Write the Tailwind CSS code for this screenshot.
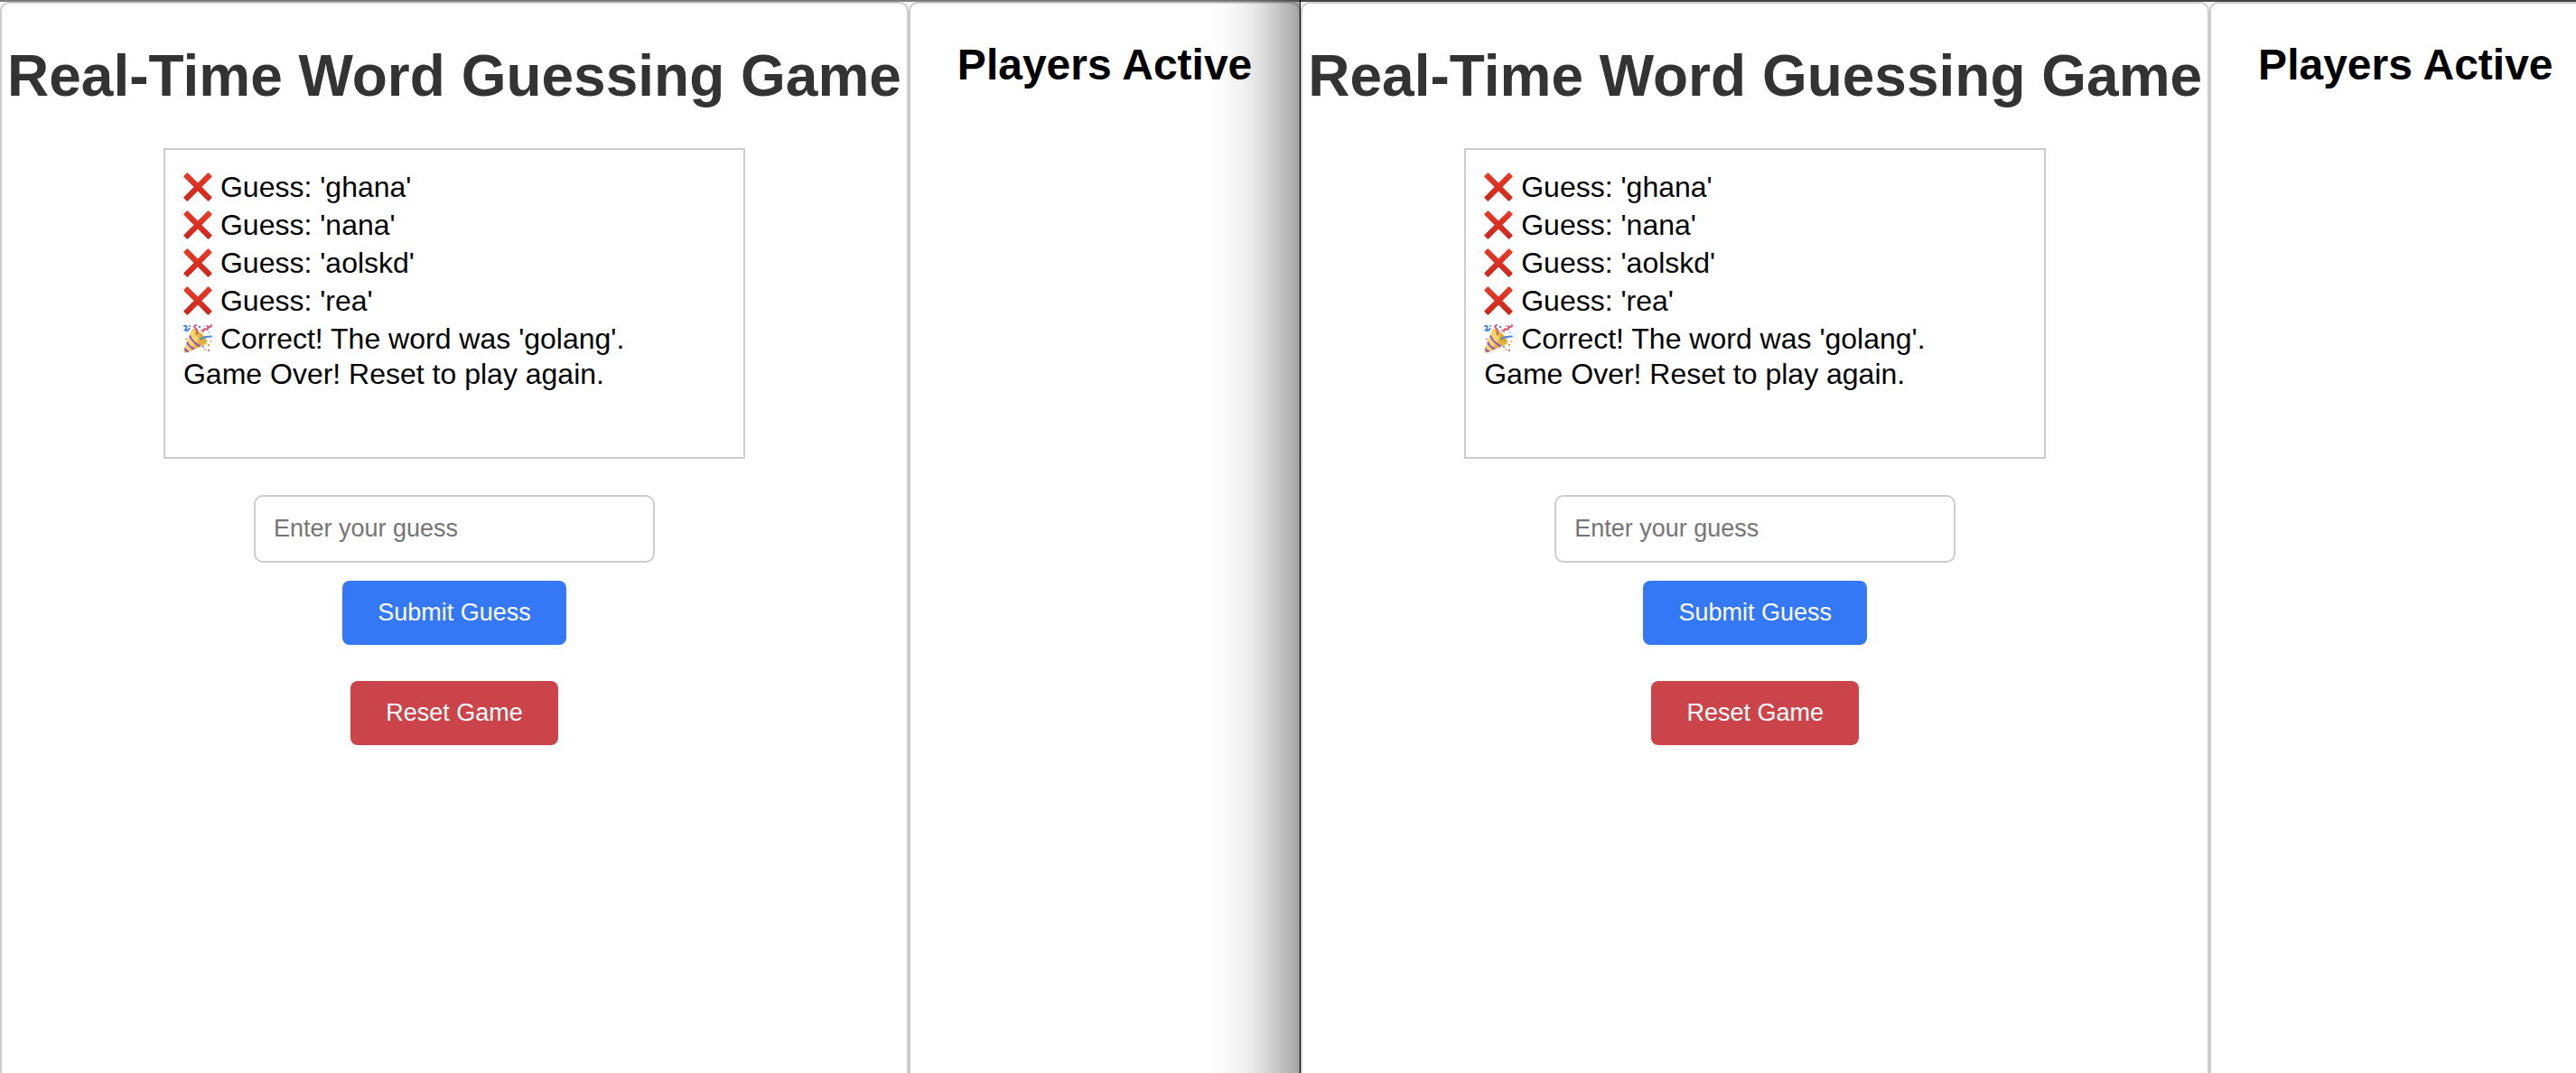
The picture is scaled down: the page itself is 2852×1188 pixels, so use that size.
<!DOCTYPE html>
<html lang="en">
<head>
<meta charset="utf-8">
<title>Real-Time Word Guessing Game</title>
<script src="https://cdn.jsdelivr.net/npm/@tailwindcss/browser@4"></script>
</head>
<body class="min-h-screen overflow-hidden bg-[#f4f4f4] font-['Liberation_Sans',Arial,sans-serif] text-[32px] leading-[42px] text-black">

<!-- Shared icons -->
<svg class="absolute size-0" aria-hidden="true">
  <defs>
    <linearGradient id="red" x1="0" y1="0" x2="0" y2="1"><stop offset="0" stop-color="#e83a28"/><stop offset="1" stop-color="#cc261c"/></linearGradient>
  </defs>
  <symbol id="cross" viewBox="0 0 32 32">
    <path fill="url(#red)" d="M5 .6 16 11.500 27 .6Q27.600 0 28.200.6L31.400 3.800Q32 4.400 31.400 5L20.400 16 31.400 27Q32 27.600 31.400 28.200L28.200 31.400Q27.600 32 27 31.400L16 20.500 5 31.400Q4.400 32 3.800 31.400L.6 28.200Q0 27.600.6 27L11.600 16 .6 5Q0 4.400.6 3.800L3.800.6Q4.400 0 5 .6Z"/>
  </symbol>
  <symbol id="party" viewBox="0 0 32 32">
    <path fill="#e3b53c" d="M9.500 5.500Q13 4 20 10Q27 16.500 26 20.500Q25 22.500 20 24.500L3 31.500Q.3 32 .5 29.500Z"/>
    <path fill="#f5d765" d="M9.500 5.500Q14 6 19 13L7 29 1 29Z"/>
    <path fill="#b98a26" d="M12 6.500Q21 11 25 20 18 18 14.500 12.500Q12 9 12 6.500Z" opacity=".35"/>
    <path fill="none" stroke="#8f49d8" stroke-width="2" d="M7 12.500Q10 20 18.500 24.500M4 19.500Q6 25 12 27.500M1.500 26.500Q2.500 29.500 5.500 30.500"/>
    <path fill="none" stroke="#4a86e0" stroke-width="2" stroke-linecap="round" d="M19 16.500Q23 13.500 31 13.500M1 2Q4 1 3.500 3.500T2 6.500Q5 8 6.500 5"/>
    <path fill="none" stroke="#e0506f" stroke-width="2" stroke-linecap="round" d="M14.500 11Q16.500 7 13.500 4.500T14 1M22 8Q22 4.500 25 5.500T27 2.500Q31 4 31 1"/>
    <g fill="#4a86e0"><circle cx="7" cy="2" r="1"/><circle cx="18" cy="3" r="1.200"/><circle cx="22" cy="25" r="1"/><circle cx="28.500" cy="9" r=".8"/></g>
    <g fill="#e0708a"><circle cx="3" cy="16.500" r="1"/><circle cx="20" cy="7" r="1"/><circle cx="28" cy="29" r="1.200"/><circle cx="24" cy="2" r=".8"/></g>
    <g fill="#e8a23c"><circle cx="28" cy="23" r="1.300"/><circle cx="30.500" cy="19" r=".9"/><circle cx="24" cy="28" r="1"/></g>
  </symbol>
</svg>

<div class="flex min-h-screen w-full">

  <!-- Window one -->
  <section class="relative flex w-[50.5%] shrink-0 border-t-2 border-[#7b7b7b]">
    <main class="flex flex-none flex-col items-center rounded-t-[10px] border-2 border-b-0 border-[#ccc] bg-white px-[6px] pt-[44px]">
      <h1 class="text-[64px] leading-[72px] font-bold whitespace-nowrap text-[#333]">Real-Time Word Guessing Game</h1>
      <div class="mt-[44px] h-[344px] w-[644px] border-2 border-[#ccc] p-5">
        <p class="flex items-center gap-[9px]"><svg class="size-8" aria-hidden="true"><use href="#cross"/></svg>Guess: 'ghana'</p>
        <p class="flex items-center gap-[9px]"><svg class="size-8" aria-hidden="true"><use href="#cross"/></svg>Guess: 'nana'</p>
        <p class="flex items-center gap-[9px]"><svg class="size-8" aria-hidden="true"><use href="#cross"/></svg>Guess: 'aolskd'</p>
        <p class="flex items-center gap-[9px]"><svg class="size-8" aria-hidden="true"><use href="#cross"/></svg>Guess: 'rea'</p>
        <p class="flex items-center gap-[9px]"><svg class="size-8" aria-hidden="true"><use href="#party"/></svg>Correct! The word was 'golang'.</p>
        <p class="leading-9">Game Over! Reset to play again.</p>
      </div>
      <form class="mt-10 flex flex-col items-center text-[27px] leading-[31px]">
        <input type="text" aria-label="Enter your guess" placeholder="Enter your guess" class="h-[75px] w-[444px] rounded-[10px] border-2 border-[#ccc] bg-white px-5 placeholder:text-[#757575]">
        <button type="button" class="mt-5 rounded-[8px] bg-[#3478f6] px-[39px] py-5 text-white">Submit Guess</button>
        <button type="reset" class="mt-10 rounded-[8px] bg-[#cb444a] px-[39px] py-5 text-white">Reset Game</button>
      </form>
    </main>
    <aside class="flex-1 rounded-t-[10px] border-2 border-b-0 border-[#ccc] bg-white pt-[41px] text-center">
      <h2 class="text-[48px] leading-[54px] font-bold whitespace-nowrap">Players Active</h2>
    </aside>
    <!-- Shadow cast by the window in front -->
    <div class="pointer-events-none absolute -top-0.5 right-0 bottom-0 w-[106px] border-r border-black bg-[linear-gradient(to_right,transparent_0%,rgb(0_0_0/0.02)_20%,rgb(0_0_0/0.06)_42%,rgb(0_0_0/0.14)_62%,rgb(0_0_0/0.24)_80%,rgb(0_0_0/0.36)_100%)]"></div>
  </section>

  <!-- Window two -->
  <section class="flex w-[50.5%] shrink-0 border-t-2 border-[#464646]">
    <main class="flex flex-none flex-col items-center rounded-t-[10px] border-2 border-b-0 border-[#ccc] bg-white px-[6px] pt-[44px]">
      <h1 class="text-[64px] leading-[72px] font-bold whitespace-nowrap text-[#333]">Real-Time Word Guessing Game</h1>
      <div class="mt-[44px] h-[344px] w-[644px] border-2 border-[#ccc] p-5">
        <p class="flex items-center gap-[9px]"><svg class="size-8" aria-hidden="true"><use href="#cross"/></svg>Guess: 'ghana'</p>
        <p class="flex items-center gap-[9px]"><svg class="size-8" aria-hidden="true"><use href="#cross"/></svg>Guess: 'nana'</p>
        <p class="flex items-center gap-[9px]"><svg class="size-8" aria-hidden="true"><use href="#cross"/></svg>Guess: 'aolskd'</p>
        <p class="flex items-center gap-[9px]"><svg class="size-8" aria-hidden="true"><use href="#cross"/></svg>Guess: 'rea'</p>
        <p class="flex items-center gap-[9px]"><svg class="size-8" aria-hidden="true"><use href="#party"/></svg>Correct! The word was 'golang'.</p>
        <p class="leading-9">Game Over! Reset to play again.</p>
      </div>
      <form class="mt-10 flex flex-col items-center text-[27px] leading-[31px]">
        <input type="text" aria-label="Enter your guess" placeholder="Enter your guess" class="h-[75px] w-[444px] rounded-[10px] border-2 border-[#ccc] bg-white px-5 placeholder:text-[#757575]">
        <button type="button" class="mt-5 rounded-[8px] bg-[#3478f6] px-[39px] py-5 text-white">Submit Guess</button>
        <button type="reset" class="mt-10 rounded-[8px] bg-[#cb444a] px-[39px] py-5 text-white">Reset Game</button>
      </form>
    </main>
    <aside class="flex-1 rounded-t-[10px] border-2 border-b-0 border-[#ccc] bg-white pt-[41px] text-center">
      <h2 class="text-[48px] leading-[54px] font-bold whitespace-nowrap">Players Active</h2>
    </aside>
  </section>
</div>
</body>
</html>
